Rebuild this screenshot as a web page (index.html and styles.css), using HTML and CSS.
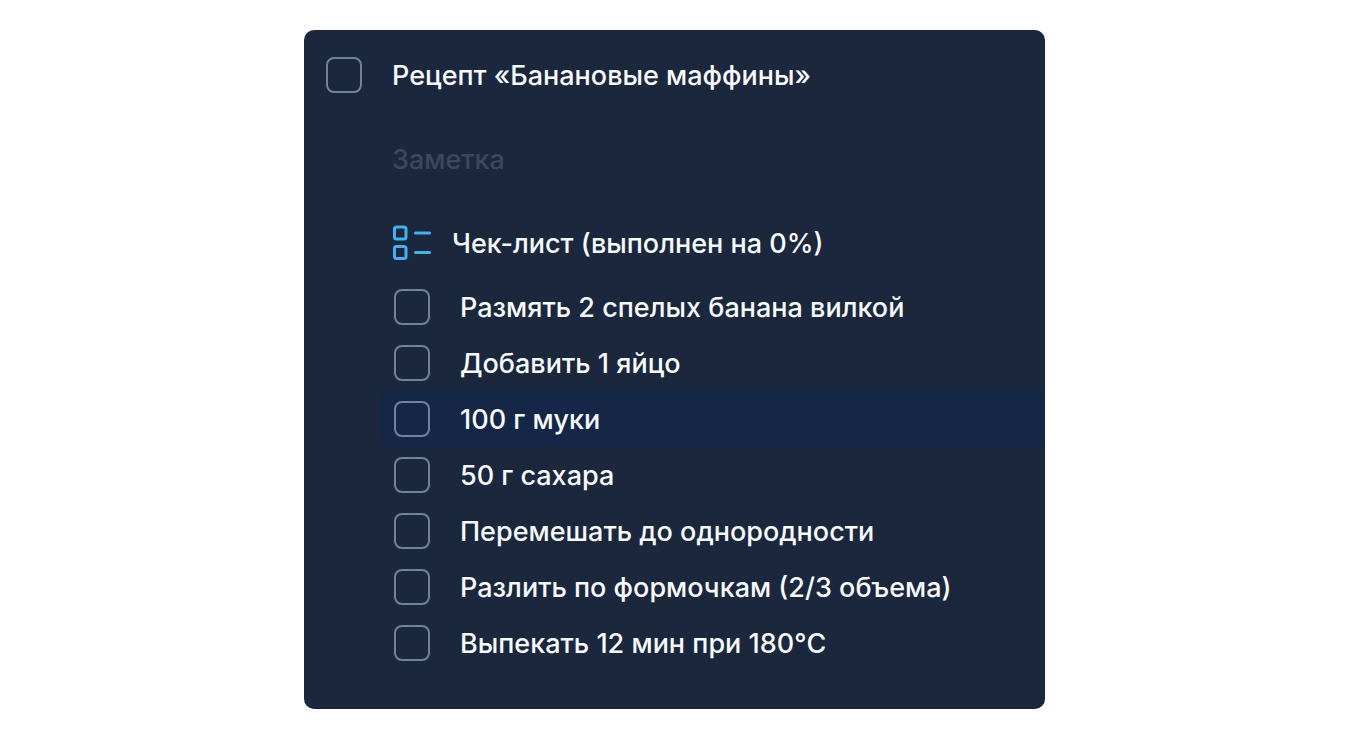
FILE: index.html
```
<!DOCTYPE html>
<html lang="ru">
<head>
    <meta charset="UTF-8">
    <meta name="viewport" content="width=device-width, initial-scale=1.0">
    <title>Рецепт «Банановые маффины»</title>
    <link rel="stylesheet" href="styles.css">
</head>
<body>
    <main class="card">
        <!-- Task title -->
        <div class="task">
            <input type="checkbox" id="task">
            <label for="task">Рецепт «Банановые маффины»</label>
        </div>

        <div class="details">
            <input type="text" class="note" placeholder="Заметка" aria-label="Заметка">

            <!-- Checklist -->
            <div class="checklist-title">
                <svg class="checklist-icon" width="40" height="36" viewBox="0 0 40 36" fill="none" stroke="#3fb2f2" stroke-width="3" stroke-linecap="round">
                    <rect x="4.5" y="2" width="11.5" height="12" rx="2"/>
                    <rect x="4.5" y="21.5" width="11.5" height="12" rx="2"/>
                    <path d="M25.5 8h14M25.5 27.5h14"/>
                </svg>
                <span>Чек-лист (выполнен на 0%)</span>
            </div>
            <ul class="checklist">
                <li><input type="checkbox" id="step1"><label for="step1">Размять 2 спелых банана вилкой</label></li>
                <li><input type="checkbox" id="step2"><label for="step2">Добавить 1 яйцо</label></li>
                <li class="active"><input type="checkbox" id="step3"><label for="step3">100 г муки</label></li>
                <li><input type="checkbox" id="step4"><label for="step4">50 г сахара</label></li>
                <li><input type="checkbox" id="step5"><label for="step5">Перемешать до однородности</label></li>
                <li><input type="checkbox" id="step6"><label for="step6">Разлить по формочкам (2/3 объема)</label></li>
                <li><input type="checkbox" id="step7"><label for="step7">Выпекать 12 мин при 180°C</label></li>
            </ul>
        </div>
    </main>
</body>
</html>
```

FILE: styles.css
```
* {
    box-sizing: border-box;
}

body {
    margin: 0;
    padding: 30px 20px;
    background-color: #ffffff;
    color: #f8fbfd;
    font-family: Inter, 'Noto Sans', sans-serif;
    font-size: 27px;
    font-weight: 500;
    line-height: 36px;
}

.card {
    max-width: 741px;
    margin: 0 auto;
    padding: 26px 0 38px;
    border-radius: 10px;
    background-color: #1b273d;
    overflow: hidden;
}

input[type="checkbox"] {
    appearance: none;
    flex: none;
    width: 36px;
    height: 36px;
    margin: 0;
    border: 2px solid #71829c;
    border-radius: 8px;
}

label,
.checklist-title span {
    padding-top: 2px;
}

.task {
    display: flex;
    align-items: center;
    gap: 30px;
    padding-left: 22px;
}

.details {
    padding-left: 76px;
}

.note {
    display: block;
    width: 100%;
    margin: 48px 0 46px;
    padding: 0 12px;
    border: none;
    background: none;
    color: inherit;
    font: inherit;
}

.note::placeholder {
    color: #3b475c;
    opacity: 1;
}

.checklist-title {
    display: flex;
    align-items: center;
    gap: 22px;
    padding-left: 10px;
}

.checklist-icon {
    flex: none;
    overflow: visible;
}

.checklist {
    margin: 17px 0 0;
    padding: 0;
    list-style: none;
}

.checklist li {
    display: flex;
    align-items: center;
    gap: 30px;
    height: 56px;
    padding-left: 14px;
}

.checklist .active {
    border-radius: 10px 0 0 10px;
    background-color: #142746; /* Current step */
}
```
